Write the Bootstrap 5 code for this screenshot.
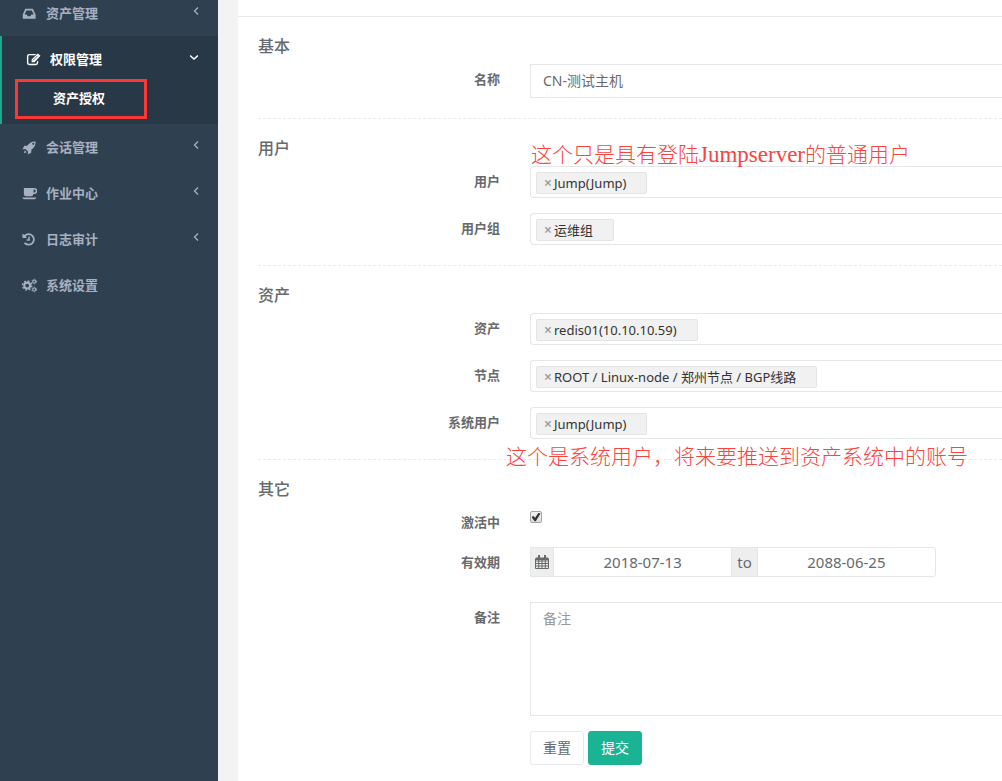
<!DOCTYPE html>
<html lang="zh-CN">
<head>
<meta charset="utf-8">
<meta name="viewport" content="width=device-width, initial-scale=1">
<title>资产授权</title>
<link href="https://cdn.jsdelivr.net/npm/bootstrap@5.3.0/dist/css/bootstrap.min.css" rel="stylesheet">
<style>
  body { font-family: "Noto Sans", "Noto Sans CJK SC", sans-serif; font-size: 13px; line-height: 18px; color: #676a6c; background: #f3f3f4; overflow-x: hidden; }
  .sidebar { width: 218px; background: #2f4050; overflow: hidden; }
  .side-menu { margin-top: -10px; }
  .side-link { height: 46px; padding: 0 18px 0 22px; color: #a7b1c2; font-weight: 600; text-decoration: none; }
  .side-link svg.glyph { width: 15px; height: 15px; margin-right: 9px; fill: currentColor; }
  .side-link .arrow { width: 8px; height: 8px; margin-bottom: 4px; fill: none; stroke: currentColor; stroke-width: 1.3; }
  .side-active { background: #293846; border-left: 2px solid #19aa8d; }
  .side-active .side-link { padding-left: 24px; padding-right: 20px; color: #fff; }
  .side-sub { height: 42px; }
  .side-sub a { padding: 7px 0 0 51px; color: #fff; font-weight: 600; text-decoration: none; }
  .mark-box { position: absolute; left: 13px; top: -3px; width: 132px; height: 40px; border: 3px solid #fb3836; pointer-events: none; }
  .page { margin-left: 20px; background: #fff; min-width: 0; }
  .page-top { height: 17px; border-bottom: 1px solid #e7eaec; }
  .sect { padding-top: 17px; margin-left: 20px; position: relative; }
  .sect + .sect { border-top: 1px dashed #e7eaec; }
  .sect h3 { font-size: 16px; line-height: 24px; font-weight: 500; margin: 0 0 6px; }
  .field { display: grid; grid-template-columns: 242px minmax(0, 1fr); column-gap: 30px; margin-bottom: 15px; }
  .field-end { margin-bottom: 20px; }
  .field-dates { margin-bottom: 25px; }
  .field-label { padding: 6px 0 1px; text-align: right; font-weight: 600; }
  .field .form-control { border: 1px solid #e5e6e7; border-radius: 0; font-size: 14px; line-height: 20px; color: #676a6c; padding: 6px 12px; }
  .field .open-end { border-right: 0; }
  .field textarea.form-control { height: 114px; resize: none; display: block; }
  .form-control::placeholder { color: #999; opacity: 1; }
  .picker { height: 32px; border: 1px solid #e5e6e7; border-right: 0; border-radius: 4px 0 0 4px; padding: 5px; }
  .tag { height: 22px; border: 1px solid #e4e4e4; border-radius: 2px; background: #f1f1f1; color: #333; padding: 0 20px 0 7px; white-space: nowrap; }
  .tag button { width: 10px; border: 0; background: none; padding: 0; color: #999; font-size: 14px; font-weight: 600; line-height: 18px; text-align: left; }
  .tick { appearance: none; width: 12px; height: 12px; margin: 4px 0 0; border: 1px solid #a5a5a5; border-radius: 2px; background: linear-gradient(#f0f0f0, #dedede); display: grid; place-items: center; }
  .tick:checked::before { content: ""; width: 9px; height: 9px; background: #333; clip-path: polygon(0 50%, 20% 38%, 40% 58%, 78% 2%, 100% 12%, 48% 96%, 34% 96%); }
  .dates { width: 406px; max-width: 100%; height: 30px; }
  .dates .input-group-text { background: #eee; border: 1px solid #e5e6e7; border-radius: 0; color: #676a6c; font-size: 15px; line-height: 18px; padding: 0 5px; }
  .dates .input-group-text:first-child { padding: 0 4px; }
  .dates .form-control { padding: 4px 0; font-size: 15px; text-align: center; }
  .dates .form-control:last-child { border-radius: 0 3px 3px 0; }
  .act { font-size: 14px; line-height: 20px; padding: 6px 12px; border-radius: 3px; }
  .act-reset { background: #fff; border-color: #e7eaec; color: #676a6c; }
  .act-send { background: #1ab394; border-color: #1ab394; color: #fff; }
  .note { position: absolute; font-family: "Noto Sans CJK SC", sans-serif; font-weight: 300; font-size: 21px; line-height: 24px; color: #fb4340; white-space: nowrap; margin: 0; }
  .note span { font-family: "Liberation Serif", serif; font-size: 23px; line-height: 20px; }
  .note-user { left: 273px; top: 22px; }
  .note-sys { left: 248px; bottom: -28px; z-index: 1; }
</style>
</head>
<body>
<svg class="d-none" aria-hidden="true">
  <symbol id="left" viewBox="0 0 8 8"><path d="M6 .5 2.500 4 6 7.500"/></symbol>
  <symbol id="down" viewBox="0 0 8 8"><path d="M0 2.500 4 6 8 2.500" stroke-width="1.500"/></symbol>
</svg>
<div class="d-flex min-vh-100">
  <nav class="sidebar flex-shrink-0">
    <ul class="side-menu list-unstyled mb-0">
      <li><a href="#" class="side-link d-flex align-items-center">
        <svg class="glyph" viewBox="0 0 16 16"><path fill-rule="evenodd" d="M3.500 3h8l3 6v4.500H.8V9zM4.700 4.800 2.700 9H5l1 2h3l1-2h2.500l-2-4.200z"/></svg>资产管理
        <svg class="arrow ms-auto"><use href="#left"/></svg></a></li>
      <li class="side-active">
        <a href="#" class="side-link d-flex align-items-center">
          <svg class="glyph" viewBox="0 0 16 16"><path d="M11 2H3.500A2.500 2.500 0 0 0 1 4.500v7A2.500 2.500 0 0 0 3.500 14h7a2.500 2.500 0 0 0 2.500-2.500V9l-1.500 1.500v1a1 1 0 0 1-1 1h-7a1 1 0 0 1-1-1v-7a1 1 0 0 1 1-1h6zM6 8l6.500-6.500L15.500 4 9 10.800H6z"/><path d="m7.500 9 5-5" stroke="#293846" stroke-width=".8"/></svg>权限管理
          <svg class="arrow ms-auto"><use href="#down"/></svg></a>
        <div class="side-sub position-relative"><a href="#" class="d-block">资产授权</a><span class="mark-box"></span></div>
      </li>
      <li><a href="#" class="side-link d-flex align-items-center">
        <svg class="glyph" viewBox="0 0 16 16"><path fill-rule="evenodd" d="M14.500 1.500C10 1.300 7.500 3.500 5.500 6L2.500 6.200.5 9.800l3.200-.3 2.800 2.800L6.200 15.500l3.600-2 .2-3.200c2.700-2 4.700-4.500 4.500-8.800M12 3a1.100 1.100 0 1 1 0 2.200A1.100 1.100 0 0 1 12 3M3 11l2 2-3 1z"/></svg>会话管理
        <svg class="arrow ms-auto"><use href="#left"/></svg></a></li>
      <li><a href="#" class="side-link d-flex align-items-center">
        <svg class="glyph" viewBox="0 0 16 16"><path fill-rule="evenodd" d="M2 2h11a3.300 3.300 0 0 1 0 6.600h-.8A2.500 2.500 0 0 1 10 11H4.500A2.500 2.500 0 0 1 2 8.500zm10.300 1.700v3.200h.7a1.600 1.600 0 0 0 0-3.200zM.5 12.200h14.500c0 1-.8 1.800-2 1.800H2.500c-1.200 0-2-.8-2-1.800"/></svg>作业中心
        <svg class="arrow ms-auto"><use href="#left"/></svg></a></li>
      <li><a href="#" class="side-link d-flex align-items-center">
        <svg class="glyph" viewBox="0 0 16 16"><path d="M.5 1.500v5h5L3.800 4.800a4.600 4.600 0 1 1-.2 6L2 12.200A6.600 6.600 0 1 0 2.300 3.300z"/><path d="M6.800 4.800h1.500v4.500H5V7.800h1.800z"/></svg>日志审计
        <svg class="arrow ms-auto"><use href="#left"/></svg></a></li>
      <li><a href="#" class="side-link d-flex align-items-center">
        <svg class="glyph overflow-visible" viewBox="0 0 16 16"><g fill="none" stroke="currentColor"><circle cx="5.500" cy="8" r="3.100" stroke-width="2.200"/><circle cx="5.500" cy="8" r="4.900" stroke-width="1.500" stroke-dasharray="1.920 1.928"/><circle cx="13" cy="3.800" r="1.600" stroke-width="1.200"/><circle cx="13" cy="3.800" r="2.500" stroke-width="1" stroke-dasharray="1.300 1.318"/><circle cx="13" cy="12.200" r="1.600" stroke-width="1.200"/><circle cx="13" cy="12.200" r="2.500" stroke-width="1" stroke-dasharray="1.300 1.318"/></g></svg>系统设置</a></li>
    </ul>
  </nav>
  <main class="page flex-grow-1">
    <div class="page-top"></div>
    <form>
      <section class="sect">
        <h3>基本</h3>
        <div class="field field-end">
          <label class="field-label" for="name">名称</label>
          <input id="name" type="text" class="form-control open-end" value="CN-测试主机">
        </div>
      </section>
      <section class="sect">
        <h3>用户</h3>
        <p class="note note-user">这个只是具有登陆<span>Jumpserver</span>的普通用户</p>
        <div class="field">
          <span class="field-label" id="l-user">用户</span>
          <div class="picker d-flex" role="group" aria-labelledby="l-user"><span class="tag d-flex align-items-center"><button type="button">×</button>Jump(Jump)</span></div>
        </div>
        <div class="field field-end">
          <span class="field-label" id="l-group">用户组</span>
          <div class="picker d-flex" role="group" aria-labelledby="l-group"><span class="tag d-flex align-items-center"><button type="button">×</button>运维组</span></div>
        </div>
      </section>
      <section class="sect">
        <h3>资产</h3>
        <div class="field">
          <span class="field-label" id="l-asset">资产</span>
          <div class="picker d-flex" role="group" aria-labelledby="l-asset"><span class="tag d-flex align-items-center"><button type="button">×</button>redis01(10.10.10.59)</span></div>
        </div>
        <div class="field">
          <span class="field-label" id="l-node">节点</span>
          <div class="picker d-flex" role="group" aria-labelledby="l-node"><span class="tag d-flex align-items-center"><button type="button">×</button>ROOT / Linux-node / 郑州节点 / BGP线路</span></div>
        </div>
        <div class="field field-end">
          <span class="field-label" id="l-sys">系统用户</span>
          <div class="picker d-flex" role="group" aria-labelledby="l-sys"><span class="tag d-flex align-items-center"><button type="button">×</button>Jump(Jump)</span></div>
        </div>
        <p class="note note-sys">这个是系统用户，将来要推送到资产系统中的账号</p>
      </section>
      <section class="sect">
        <h3>其它</h3>
        <div class="field">
          <label class="field-label" for="active">激活中</label>
          <input id="active" type="checkbox" class="tick" checked>
        </div>
        <div class="field field-dates">
          <label class="field-label" for="from">有效期</label>
          <div class="dates input-group flex-nowrap">
            <span class="input-group-text"><svg width="14" height="14" viewBox="0 0 14 14"><path fill="none" stroke="currentColor" d="M.5 3.500h13v10H.5zM.5 6h13M.5 8.500h13M.5 11h13M3.700 5v8.500M7 5v8.500M10.300 5v8.500"/><path fill="currentColor" d="M1 2.500h12V5H1zM3 0h2v4H3zM9 0h2v4H9z"/></svg></span>
            <input id="from" type="text" class="form-control" value="2018-07-13">
            <span class="input-group-text">to</span>
            <input type="text" class="form-control" value="2088-06-25" aria-label="结束日期">
          </div>
        </div>
        <div class="field">
          <label class="field-label" for="remark">备注</label>
          <textarea id="remark" class="form-control open-end" placeholder="备注"></textarea>
        </div>
        <div class="field">
          <div></div>
          <div class="d-flex gap-1"><button type="reset" class="btn act act-reset">重置</button><button type="submit" class="btn act act-send">提交</button></div>
        </div>
      </section>
    </form>
  </main>
</div>
<script src="https://cdn.jsdelivr.net/npm/bootstrap@5.3.0/dist/js/bootstrap.bundle.min.js"></script>
</body>
</html>
